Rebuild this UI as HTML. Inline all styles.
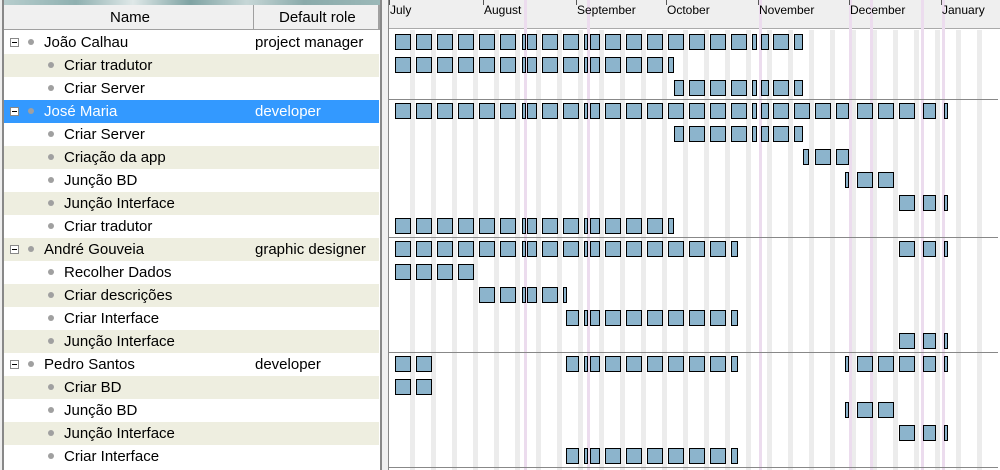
<!DOCTYPE html>
<html><head><meta charset="utf-8"><style>
*{margin:0;padding:0;box-sizing:border-box}
body{width:1000px;height:470px;overflow:hidden;background:#fff;position:relative;font-family:"Liberation Sans",sans-serif;font-size:15px;color:#000}
.a{position:absolute}
.row{position:absolute;left:4px;width:375px;height:23px}
.t{position:absolute;top:3px;white-space:nowrap}
.dot{position:absolute;top:8px;width:6px;height:6px;border-radius:50%;background:#a0a0a0}
.pm{position:absolute;left:6px;top:7px;width:9px;height:9px;border:1px solid #888;background:#fff}
.pm:after{content:"";position:absolute;left:1px;top:3px;width:5px;height:1px;background:#000}
.b{position:absolute;height:16px;background:#8cb4cc;border:1px solid #000}
.we{position:absolute;top:30px;width:5px;height:440px;background:#ececec}
.ho{position:absolute;top:0;width:3px;height:470px;background:#ecdcee}
.mt{position:absolute;top:3px;font-size:12px;white-space:nowrap}
.tk{position:absolute;top:0;width:1px;height:5px;background:#555}
.sep{position:absolute;left:388px;width:610px;height:1px;background:#888}
</style></head><body>
<div class="a" style="left:0;top:0;width:380px;height:5px;background:linear-gradient(90deg,#b9cfcf,#8fb0b0 20%,#dfe8e8 35%,#7fa3a3 50%,#c7d7d7 65%,#8aaaaa 80%,#9bb8b8)"></div>
<div class="a" style="left:0;top:0;width:2px;height:470px;background:#eee"></div>
<div class="a" style="left:2px;top:0;width:2px;height:470px;background:#888"></div>
<div class="a" style="left:4px;top:5px;width:376px;height:25px;background:#f0f0f0;border-bottom:1px solid #a0a0a0"></div>
<div class="a" style="left:253px;top:5px;width:1px;height:25px;background:#a0a0a0"></div>
<div class="a" style="left:378px;top:5px;width:2px;height:25px;background:#a0a0a0"></div>
<div class="a" style="left:110px;top:9px">Name</div>
<div class="a" style="left:279px;top:9px">Default role</div>
<div class="a" style="left:380px;top:0;width:2px;height:470px;background:#888"></div>
<div class="a" style="left:382px;top:0;width:6px;height:470px;background:#f0f0f0"></div>
<div class="a" style="left:388px;top:0;width:1px;height:470px;background:#888"></div>
<div class="a" style="left:389px;top:0;width:611px;height:29px;background:#efefef;border-bottom:1px solid #aaa"></div>
<div id="L"></div><div id="G"></div>
<script>
var rows=[
[0,"João Calhau","project manager"],[1,"Criar tradutor"],[1,"Criar Server"],
[0,"José Maria","developer"],[1,"Criar Server"],[1,"Criação da app"],[1,"Junção BD"],[1,"Junção Interface"],[1,"Criar tradutor"],
[0,"André Gouveia","graphic designer"],[1,"Recolher Dados"],[1,"Criar descrições"],[1,"Criar Interface"],[1,"Junção Interface"],
[0,"Pedro Santos","developer"],[1,"Criar BD"],[1,"Junção BD"],[1,"Junção Interface"],[1,"Criar Interface"]];
var h="";
rows.forEach(function(r,i){var y=31+23*i;var bg=i==3?"#3399ff":(i%2?"#eeeee0":"#fff");var c=i==3?"#fff":"#000";
h+='<div class="row" style="top:'+y+'px;background:'+bg+';color:'+c+'">';
if(r[0]==0){h+='<div class="pm"></div><div class="dot" style="left:24px"></div><div class="t" style="left:40px">'+r[1]+'</div><div class="t" style="left:251px">'+r[2]+'</div>';}
else h+='<div class="dot" style="left:44px"></div><div class="t" style="left:60px">'+r[1]+'</div>';
h+='</div>';});
document.getElementById("L").innerHTML=h;
var g="";
for(var k=0;k<28;k++){g+='<div class="we" style="left:'+(410+21*k)+'px"></div>';}
[524,587,759,849,870,921,942].forEach(function(x){g+='<div class="ho" style="left:'+x+'px"></div>';});
[["July",389],["August",483],["September",576],["October",666],["November",758],["December",849],["January",941]].forEach(function(m){g+='<div class="tk" style="left:'+m[1]+'px"></div><div class="mt" style="left:'+(m[1]+1)+'px">'+m[0]+'</div>';});
[99,237,352,467].forEach(function(y){g+='<div class="sep" style="top:'+y+'px"></div>';});
function wk(k){var L=395+21*k;if(k==6)return[[522,4],[527,10]];if(k==9)return[[584,4],[590,10]];if(k==17)return[[752,5],[761,8]];if(k==21)return[[836,13]];if(k==25)return[[923,13]];if(k==26)return[[944,4]];return[[L,16]];}
function W(a,b){var o=[];for(var k=a;k<=b;k++)o=o.concat(wk(k));return o;}
var ji=[[899,16],[923,13],[944,4]],jb=[[845,4],[857,16],[878,16]];
var ct=W(0,12).concat([[668,6]]),cs=[[674,10]].concat(W(14,18),[[794,9]]),ci=[[566,13]].concat(W(9,15),[[731,7]]);
var B=[W(0,18).concat([[794,9]]),ct,cs,W(0,26),cs,[[803,6],[815,16],[836,13]],jb,ji,ct,
W(0,15).concat([[731,7]],ji),W(0,3),W(4,7).concat([[563,4]]),ci,ji,
W(0,1).concat(ci,jb,ji),W(0,1),jb,ji,ci];
B.forEach(function(r,i){var y=34+23*i;r.forEach(function(p){g+='<div class="b" style="left:'+p[0]+'px;top:'+y+'px;width:'+p[1]+'px"></div>';});});
document.getElementById("G").innerHTML=g;
</script>
</body></html>
